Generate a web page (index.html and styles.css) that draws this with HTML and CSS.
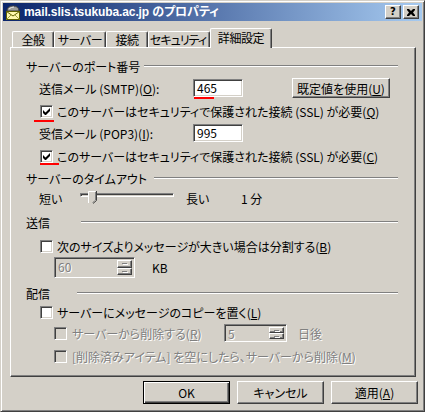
FILE: index.html
```html
<!DOCTYPE html>
<html lang="ja">
<head>
<meta charset="utf-8">
<title>mail.slis.tsukuba.ac.jp のプロパティ</title>
<link rel="stylesheet" href="styles.css">
</head>
<body>
<div class="window">
  <div class="titlebar">
    <svg class="app-icon" width="16" height="16" viewBox="0 0 16 16">
      <path d="M2 7 Q2 2 8 2 Q14 2 14 7 Z" fill="#9a9a9a" stroke="#404040" stroke-width="1"/>
      <path d="M4 5 Q6 3 9 3" fill="none" stroke="#e8e8e8" stroke-width="1"/>
      <rect x="1.5" y="7.5" width="13" height="8" fill="#fff8b0" stroke="#606000"/>
      <path d="M1.5 7.5 L8 12 L14.5 7.5" fill="none" stroke="#606000"/>
      <path d="M1.5 15.5 L6 11 M14.5 15.5 L10 11" fill="none" stroke="#a0a040"/>
    </svg>
    <span class="title">mail.slis.tsukuba.ac.jp のプロパティ</span>
    <div class="caption-btns">
      <span class="cbtn">?</span>
      <span class="cbtn close">
        <svg width="8" height="7" viewBox="0 0 8 7"><path d="M0 0h2l2 2 2-2h2v1l-2 2.5 2 2.5v1h-2l-2-2-2 2h-2v-1l2-2.5-2-2.5z" fill="#000"/></svg>
      </span>
    </div>
  </div>

  <div class="tabs">
    <div class="tab w42">全般</div>
    <div class="tab w52">サーバー</div>
    <div class="tab w42">接続</div>
    <div class="tab w62 tight">セキュリティ</div>
    <div class="tab active">詳細設定</div>
  </div>

  <div class="panel">
    <div class="group-head gh-port"><span class="gh-label lw118">サーバーのポート番号</span><span class="etch"></span></div>

    <div class="row row-smtp">
      <span class="field-label">送信メール (SMTP)(<u>O</u>):</span>
      <span class="edit marked">465</span>
      <span class="btn btn-reset">既定値を使用(<u>U</u>)</span>
    </div>

    <div class="row row-cb row-cb1">
      <span class="cb marked-cb1"><svg width="7" height="7" viewBox="0 0 7 7"><path d="M0 2v3l2 2h1l4-4V0L2.5 4.5z" fill="#000"/></svg></span>
      <span class="cb-text">このサーバーはセキュリティで保護された接続 (SSL) が必要(<u>Q</u>)</span>
    </div>

    <div class="row row-pop">
      <span class="field-label">受信メール (POP3)(<u>I</u>):</span>
      <span class="edit">995</span>
    </div>

    <div class="row row-cb row-cb2">
      <span class="cb marked-cb2"><svg width="7" height="7" viewBox="0 0 7 7"><path d="M0 2v3l2 2h1l4-4V0L2.5 4.5z" fill="#000"/></svg></span>
      <span class="cb-text">このサーバーはセキュリティで保護された接続 (SSL) が必要(<u>C</u>)</span>
    </div>

    <div class="group-head gh-timeout"><span class="gh-label lw128">サーバーのタイムアウト</span><span class="etch"></span></div>

    <div class="row row-slider">
      <span class="slider-label">短い</span>
      <span class="slider">
        <span class="track"></span>
        <svg class="thumb" width="9" height="13" viewBox="0 0 9 13">
          <path d="M0.5 12 V0.5 H7.5" fill="none" stroke="#fff"/>
          <path d="M8.5 0 V9.5 L5 12.5" fill="none" stroke="#404040"/>
          <path d="M7.5 1 V9 L4.5 11.5" fill="none" stroke="#808080"/>
          <path d="M1 1 H7 V9 L4.5 11 L1 9 Z" fill="#D4D0C8"/>
        </svg>
      </span>
      <span class="long-label">長い</span>
      <span>1 分</span>
    </div>

    <div class="group-head gh-send"><span class="gh-label lw55">送信</span><span class="etch"></span></div>

    <div class="row row-cb row-cb3">
      <span class="cb"></span>
      <span class="cb-text">次のサイズよりメッセージが大きい場合は分割する(<u>B</u>)</span>
    </div>

    <div class="row row-size">
      <span class="spinner sp-size">
        <span class="sp-value disabled">60</span>
        <span class="sp-buttons"><span class="sp-btn"><i class="arr up"></i></span><span class="sp-btn"><i class="arr down"></i></span></span>
      </span>
      <span class="kb">KB</span>
    </div>

    <div class="group-head gh-recv"><span class="gh-label lw51">配信</span><span class="etch"></span></div>

    <div class="row row-cb row-cb4">
      <span class="cb"></span>
      <span class="cb-text">サーバーにメッセージのコピーを置く(<u>L</u>)</span>
    </div>

    <div class="row row-dis row-dis1">
      <span class="cb disabled-cb"></span>
      <span class="cb-text disabled del-label">サーバーから削除する(<u>R</u>)</span>
      <span class="spinner sp-days">
        <span class="sp-value disabled">5</span>
        <span class="sp-buttons"><span class="sp-btn"><i class="arr up"></i></span><span class="sp-btn"><i class="arr down"></i></span></span>
      </span>
      <span class="days disabled">日後</span>
    </div>

    <div class="row row-dis row-dis2">
      <span class="cb disabled-cb"></span>
      <span class="cb-text disabled">[削除済みアイテム] を空にしたら、サーバーから削除(<u>M</u>)</span>
    </div>
  </div>

  <div class="actions">
    <span class="btn btn-action btn-default">OK</span>
    <span class="btn btn-action">キャンセル</span>
    <span class="btn btn-action">適用(<u>A</u>)</span>
  </div>
</div>
</body>
</html>
```

FILE: styles.css
```css
html, body {
  margin: 0;
  padding: 0;
  background: #D4D0C8;
}

body {
  font-family: "Noto Sans CJK JP", "Liberation Sans", sans-serif;
  font-size: 12px;
  font-feature-settings: "palt";
  color: #000;
}

u {
  text-decoration: underline;
  text-underline-offset: 1px;
}

.window {
  width: 425px;
  height: 412px;
  box-sizing: border-box;
  background: #D4D0C8;
  border: 1px solid;
  border-color: #D4D0C8 #404040 #404040 #D4D0C8;
  box-shadow: inset 1px 1px #fff, inset -1px -1px #808080;
  padding: 2px;
  display: flex;
  flex-direction: column;
}

/* ---------- title bar ---------- */
.titlebar {
  height: 18px;
  flex: none;
  display: flex;
  align-items: center;
  background: linear-gradient(to right, #0A246A, #A6CAF0);
  padding-left: 2px;
  padding-right: 3px;
}

.app-icon {
  flex: none;
  margin-right: 3px;
}

.title {
  color: #fff;
  font-family: "Liberation Sans", "Noto Sans CJK JP", sans-serif;
  font-weight: bold;
  font-size: 12px;
  font-feature-settings: "palt";
  letter-spacing: -0.1px;
  white-space: nowrap;
  flex: 1;
  line-height: 18px;
}

.caption-btns {
  display: flex;
  gap: 2px;
}

.cbtn {
  width: 16px;
  height: 14px;
  box-sizing: border-box;
  background: #D4D0C8;
  border: 1px solid;
  border-color: #fff #404040 #404040 #fff;
  box-shadow: inset -1px -1px #808080;
  display: flex;
  align-items: center;
  justify-content: center;
  font-family: "DejaVu Sans", sans-serif;
  font-weight: bold;
  font-size: 10px;
  line-height: 12px;
  color: #000;
}

/* ---------- tabs ---------- */
.tabs {
  display: flex;
  align-items: flex-end;
  height: 19px;
  margin-top: 7px;
  padding-left: 9px;
  flex: none;
}

.tab {
  box-sizing: border-box;
  height: 16px;
  border-top: 1px solid #fff;
  border-left: 1px solid #fff;
  border-right: 1px solid #404040;
  box-shadow: inset -1px 0 #808080;
  border-radius: 2px 2px 0 0;
  display: flex;
  align-items: center;
  justify-content: center;
  line-height: 14px;
  padding-top: 1px;
  white-space: nowrap;
  letter-spacing: -0.4px;
}

.w42 { width: 42px; }
.w52 { width: 52px; }
.w62 { width: 62px; }

.tight {
  letter-spacing: -1px;
  padding-right: 2px;
}

.tab.active {
  width: 62px;
  height: 20px;
  margin-bottom: -1px;
  background: #D4D0C8;
  position: relative;
  z-index: 1;
  padding-bottom: 3px;
}

/* ---------- panel ---------- */
.panel {
  box-sizing: border-box;
  width: 406px;
  height: 330px;
  margin-left: 7px;
  flex: none;
  border: 1px solid;
  border-color: #fff #404040 #404040 #fff;
  box-shadow: inset -1px -1px #808080;
  padding: 0 17px 0 15px;
  display: flex;
  flex-direction: column;
}

.group-head {
  display: flex;
  align-items: center;
  height: 16px;
  flex: none;
}

.gh-label {
  flex: none;
  white-space: nowrap;
}

.lw118 { width: 118px; }
.lw128 { width: 128px; }
.lw55 { width: 55px; }
.lw51 { width: 51px; }

.etch {
  flex: 1;
  height: 0;
  border-top: 1px solid #808080;
  border-bottom: 1px solid #fff;
}

.gh-port { margin-top: 10px; }
.gh-timeout { margin-top: 5px; }
.gh-send { margin-top: 6px; }
.gh-recv { margin-top: 7px; }

.row {
  display: flex;
  align-items: center;
  flex: none;
  white-space: nowrap;
}

.row-smtp { height: 20px; margin-top: 4px; padding-left: 13px; }
.row-pop { height: 20px; margin-top: 3px; padding-left: 13px; }
.row-cb { height: 18px; padding-left: 14px; }
.row-cb1 { margin-top: 4px; }
.row-cb2 { margin-top: 4px; }
.row-cb3 { margin-top: 7px; }
.row-cb4 { margin-top: 2px; }
.row-slider { height: 20px; margin-top: 2px; padding-left: 13px; }
.row-size { height: 21px; margin-top: 2px; padding-left: 28px; }
.row-dis { padding-left: 28px; }
.row-dis1 { height: 20px; margin-top: 2px; }
.row-dis2 { height: 18px; margin-top: 4px; }

.field-label {
  width: 154px;
  flex: none;
}

.edit {
  box-sizing: border-box;
  width: 50px;
  height: 18px;
  background: #fff;
  border: 1px solid;
  border-color: #808080 #fff #fff #808080;
  box-shadow: inset 1px 1px #404040, inset -1px -1px #D4D0C8;
  padding: 0 3px;
  line-height: 16px;
  flex: none;
}

.marked {
  position: relative;
}

.marked::after {
  content: "";
  position: absolute;
  left: 0;
  bottom: -3px;
  width: 20px;
  height: 2px;
  background: #f00;
}

.btn {
  box-sizing: border-box;
  background: #D4D0C8;
  border: 1px solid;
  border-color: #fff #404040 #404040 #fff;
  box-shadow: inset -1px -1px #808080;
  display: flex;
  align-items: center;
  justify-content: center;
  flex: none;
}

.btn-reset {
  width: 98px;
  height: 20px;
  margin-left: 49px;
}

/* checkboxes */
.cb {
  box-sizing: border-box;
  width: 13px;
  height: 13px;
  flex: none;
  background: #fff;
  border: 1px solid;
  border-color: #808080 #fff #fff #808080;
  box-shadow: inset 1px 1px #404040, inset -1px -1px #D4D0C8;
  display: flex;
  align-items: center;
  justify-content: center;
}

.disabled-cb {
  background: #D4D0C8;
}

.cb-text {
  margin-left: 4px;
}

.row-dis .cb-text {
  margin-left: 5px;
}

.marked-cb1,
.marked-cb2 {
  position: relative;
}

.marked-cb1::after {
  content: "";
  position: absolute;
  left: -7px;
  top: 14px;
  width: 20px;
  height: 2px;
  background: #f00;
}

.marked-cb2::after {
  content: "";
  position: absolute;
  left: -1px;
  top: 12px;
  width: 19px;
  height: 2px;
  background: #f00;
}

.disabled {
  color: #808080;
  text-shadow: 1px 1px #fff;
}

/* slider */
.slider-label {
  width: 41px;
  flex: none;
}

.slider {
  position: relative;
  width: 94px;
  height: 20px;
  flex: none;
}

.track {
  position: absolute;
  left: 0;
  right: 0;
  top: 5px;
  height: 2px;
  border-top: 1px solid #808080;
  border-left: 1px solid #808080;
  border-bottom: 1px solid #fff;
  border-right: 1px solid #fff;
  box-shadow: inset 1px 1px #404040;
  box-sizing: content-box;
}

.thumb {
  position: absolute;
  left: 8px;
  top: 3px;
}

.long-label {
  margin-left: 12px;
  width: 55px;
}

/* spinners */
.spinner {
  box-sizing: border-box;
  display: flex;
  flex: none;
  background: #D4D0C8;
  border: 1px solid;
  border-color: #808080 #fff #fff #808080;
  box-shadow: inset 1px 1px #404040, inset -1px -1px #D4D0C8;
  padding: 2px;
}

.sp-size {
  width: 81px;
  height: 21px;
}

.sp-days {
  width: 63px;
  height: 18px;
}

.sp-value {
  flex: 1;
  line-height: 14px;
  padding-left: 1px;
}

.sp-buttons {
  width: 15px;
  display: flex;
  flex-direction: column;
}

.sp-btn {
  flex: 1;
  box-sizing: border-box;
  background: #D4D0C8;
  border: 1px solid;
  border-color: #fff #404040 #404040 #fff;
  box-shadow: inset -1px -1px #808080;
  display: flex;
  align-items: center;
  justify-content: center;
}

.arr {
  display: block;
  width: 5px;
  height: 1px;
  background: #808080;
  box-shadow: 1px 1px #fff;
}

.kb {
  margin-left: 17px;
}

.del-label {
  width: 152px;
  flex: none;
}

.days {
  margin-left: 11px;
}

/* bottom buttons */
.actions {
  display: flex;
  justify-content: flex-end;
  gap: 7px;
  margin-top: 4px;
  padding-right: 4px;
  flex: none;
}

.btn-action {
  width: 87px;
  height: 23px;
}

.btn-default {
  border-color: #000;
  box-shadow: inset 1px 1px #fff, inset -1px -1px #404040, inset -2px -2px #808080;
}
```
